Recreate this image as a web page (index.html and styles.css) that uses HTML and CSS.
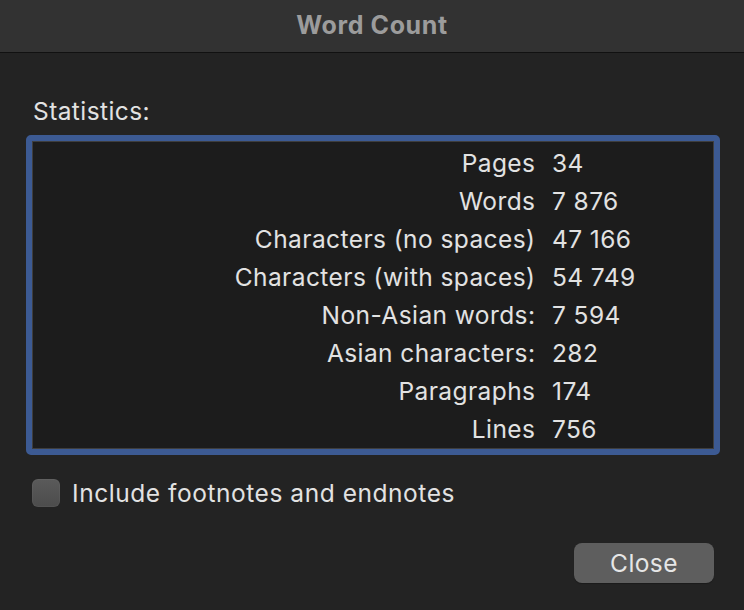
FILE: index.html
```html
<!DOCTYPE html>
<html>
<head>
<meta charset="utf-8">
<link rel="stylesheet" href="styles.css">
</head>
<body>
<div class="window">
  <div class="titlebar">Word Count</div>
  <div class="content">
    <div class="section-label">Statistics:</div>
    <div class="stats">
      <div class="stats-inner">
        <div class="row"><span class="k">Pages</span><span class="v">34</span></div>
        <div class="row"><span class="k">Words</span><span class="v">7 876</span></div>
        <div class="row"><span class="k">Characters (no spaces)</span><span class="v">47 166</span></div>
        <div class="row"><span class="k">Characters (with spaces)</span><span class="v">54 749</span></div>
        <div class="row"><span class="k">Non-Asian words:</span><span class="v">7 594</span></div>
        <div class="row"><span class="k">Asian characters:</span><span class="v">282</span></div>
        <div class="row"><span class="k">Paragraphs</span><span class="v">174</span></div>
        <div class="row"><span class="k">Lines</span><span class="v">756</span></div>
      </div>
    </div>
    <label class="check">
      <span class="box"></span>
      <span class="check-text">Include footnotes and endnotes</span>
    </label>
    <div class="actions">
      <button class="btn">Close</button>
    </div>
  </div>
</div>
</body>
</html>
```

FILE: styles.css
```css
html, body {
  margin: 0;
  padding: 0;
  background: #232323;
}

body {
  font-family: Inter, "Liberation Sans", sans-serif;
  color: #e2e2e2;
}

.window {
  width: 744px;
  height: 610px;
  background: #232323;
  overflow: hidden;
}

.titlebar {
  height: 53px;
  background: #323232;
  border-bottom: 1px solid #111111;
  display: flex;
  align-items: center;
  justify-content: center;
  font-size: 25px;
  letter-spacing: 0.6px;
  font-weight: 700;
  color: #9c9c9c;
  padding-bottom: 3px;
  box-sizing: border-box;
}

.content {
  padding: 44px 24px 0 26px;
}

.section-label {
  font-size: 24.5px;
  letter-spacing: 0.42px;
  line-height: 28px;
  padding-left: 7px;
  margin-bottom: 10px;
}

.stats {
  width: 694px;
  box-sizing: border-box;
  border: 6px solid #3c5a93;
  border-radius: 5px;
}

.stats-inner {
  background: #1c1c1c;
  border: 1px solid #3e3e3e;
  padding: 2px 0 0 0;
}

.row {
  display: grid;
  grid-template-columns: 502px 1fr;
  column-gap: 17px;
  height: 38px;
  line-height: 38px;
  font-size: 24.5px;
  letter-spacing: 0.42px;
}

.k {
  text-align: right;
  white-space: nowrap;
  margin-right: -0.42px;
}

.v {
  white-space: nowrap;
}

.check {
  display: flex;
  align-items: center;
  gap: 12px;
  margin-top: 24px;
  padding-left: 6px;
}

.box {
  width: 28px;
  height: 28px;
  border-radius: 6px;
  background: linear-gradient(#5a5a5a, #4c4c4c);
  box-shadow: inset 0 0 0 1px rgba(255, 255, 255, 0.04);
}

.check-text {
  font-size: 24.5px;
  letter-spacing: 0.55px;
  line-height: 28px;
}

.actions {
  display: flex;
  justify-content: flex-end;
  margin-top: 36px;
  padding-right: 6px;
}

.btn {
  width: 140px;
  height: 40px;
  border: none;
  border-radius: 8px;
  background: #5e5e5e;
  color: #e6e6e6;
  font-family: Inter, "Liberation Sans", sans-serif;
  font-size: 24.5px;
  letter-spacing: 0.42px;
  padding: 0;
  box-shadow: 0 1px 1px rgba(0, 0, 0, 0.25);
}
```
